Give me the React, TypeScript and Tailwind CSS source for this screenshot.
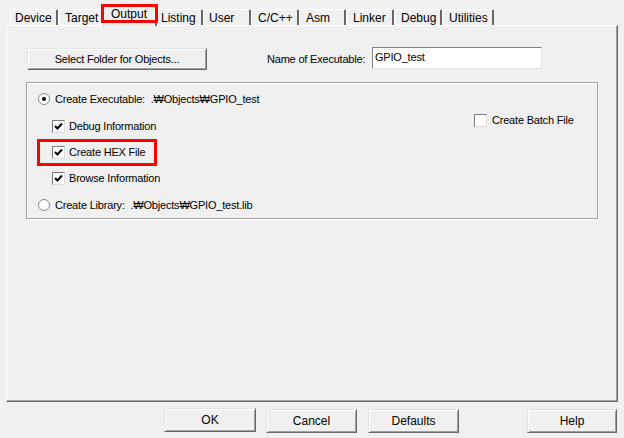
import React from 'react';

const tabs = [
  { label: 'Device', w: 'w-[48px]', pl: 'pl-[4px]' },
  { label: 'Target', w: 'w-[45px]', pl: 'pl-[6px]' },
  { label: 'Output', w: 'w-[52px]', pl: 'pl-[6px]', active: true },
  { label: 'Listing', w: 'w-[48px]', pl: 'pl-[5px]' },
  { label: 'User', w: 'w-[48px]', pl: 'pl-[5px]' },
  { label: 'C/C++', w: 'w-[48px]', pl: 'pl-[6px]' },
  { label: 'Asm', w: 'w-[47px]', pl: 'pl-[6px]' },
  { label: 'Linker', w: 'w-[48px]', pl: 'pl-[6px]' },
  { label: 'Debug', w: 'w-[48px]', pl: 'pl-[6px]' },
  { label: 'Utilities', w: 'w-[52px]', pl: 'pl-[6px]' },
];

// classic 3d push button
const Button = ({ label, w }: { label: string; w: string }) => (
  <button
    className={`${w} h-[24px] bg-[#f0f0f0] border border-t-[#e3e3e3] border-l-[#e3e3e3] border-r-[#696969] border-b-[#696969] shadow-[inset_1px_1px_0_#ffffff,inset_-1px_-1px_0_#a0a0a0] text-[12px] text-black leading-none`}
  >
    {label}
  </button>
);

const CheckBox = ({ checked }: { checked?: boolean }) => (
  <span className="w-[13px] h-[13px] bg-white border border-t-[#7a7a7a] border-l-[#7a7a7a] border-r-[#dcdcdc] border-b-[#dcdcdc] flex items-center justify-center shrink-0">
    {checked && (
      <svg width="9" height="9" viewBox="0 0 9 9">
        <path d="M1 4 L3.5 6.5 L8 1.5" stroke="#000" strokeWidth="2" fill="none" />
      </svg>
    )}
  </span>
);

const Radio = ({ checked }: { checked?: boolean }) => (
  <span className="w-[12px] h-[12px] rounded-full bg-white border border-[#8a8a8a] flex items-center justify-center shrink-0">
    {checked && <span className="w-[4px] h-[4px] rounded-full bg-black" />}
  </span>
);

const App = () => {
  return (
    <div className="w-[624px] h-[438px] bg-[#f0f0f0] text-black font-['Liberation_Sans','DejaVu_Sans','Noto_Sans_CJK_KR',sans-serif] overflow-hidden">
      {/* Tab strip */}
      <div className="flex items-end h-[25px] pl-[10px]">
        {tabs.map((t) =>
          t.active ? (
            <div
              key={t.label}
              className="relative z-10 -mx-[2px] -mb-[1px] w-[56px] h-[21px] bg-[#f0f0f0] border-t border-l border-white border-r-2 border-r-[#696969] rounded-t-[2px] pl-[9px] text-[12px] leading-[14px] pt-[1px]"
            >
              {t.label}
              <div className="absolute -left-px -right-[3px] -top-[2px] bottom-[3px] border-[3px] border-[#ff0000]" />
            </div>
          ) : (
            <div
              key={t.label}
              className={`${t.w} ${t.pl} h-[16px] border-t border-l border-white border-r-2 border-r-[#696969] rounded-t-[2px] text-[12px] leading-[14px] pt-[1px]`}
            >
              {t.label}
            </div>
          )
        )}
      </div>

      {/* Tab panel */}
      <div className="ml-[6px] w-[612px] h-[377px] border-t border-l border-white border-r border-b border-r-[#696969] border-b-[#696969] shadow-[inset_-1px_-1px_0_#a0a0a0] pl-[20px] pt-[22px] text-[11px] tracking-[-0.2px]">
        <div className="flex items-center h-[22px]">
          <button className="w-[180px] h-[22px] bg-[#f0f0f0] border border-t-[#e3e3e3] border-l-[#e3e3e3] border-r-[#696969] border-b-[#696969] shadow-[inset_1px_1px_0_#ffffff,inset_-1px_-1px_0_#a0a0a0] text-[11px] tracking-[-0.2px]">
            Select Folder for Objects...
          </button>
          <span className="ml-[60px] w-[99px]">Name of Executable:</span>
          <div className="ml-[6px] -mt-[2px] w-[170px] h-[22px] bg-white border border-t-[#828282] border-l-[#828282] border-r-[#e3e3e3] border-b-[#e3e3e3] pl-[2px] pt-[2px] leading-[14px]">
            GPIO_test
          </div>
        </div>

        {/* Group box */}
        <div className="mt-[12px] -ml-px w-[572px] h-[137px] border border-[#a0a0a0] shadow-[1px_1px_0_#ffffff,inset_1px_1px_0_#ffffff] flex">
          <div className="w-[447px] pl-[11px] pt-[8px] flex flex-col">
            <div className="flex items-center h-[16px] gap-[5px]">
              <Radio checked />
              <span>Create Executable:&nbsp;&nbsp;.₩Objects₩GPIO_test</span>
            </div>
            <div className="flex items-center h-[16px] gap-[4px] mt-[11px] pl-[14px]">
              <CheckBox checked />
              <span>Debug Information</span>
            </div>
            <div className="relative flex items-center h-[16px] gap-[4px] mt-[10px] pl-[14px]">
              <CheckBox checked />
              <span>Create HEX File</span>
              <div className="absolute -left-[1px] -top-[5px] w-[120px] h-[27px] border-[3px] border-[#ff0000]" />
            </div>
            <div className="flex items-center h-[16px] gap-[4px] mt-[10px] pl-[14px]">
              <CheckBox checked />
              <span>Browse Information</span>
            </div>
            <div className="flex items-center h-[16px] gap-[5px] mt-[11px]">
              <Radio />
              <span>Create Library:&nbsp;&nbsp;.₩Objects₩GPIO_test.lib</span>
            </div>
          </div>
          <div className="pt-[29px]">
            <div className="flex items-center h-[16px] gap-[5px]">
              <CheckBox />
              <span>Create Batch File</span>
            </div>
          </div>
        </div>
      </div>

      {/* Bottom buttons */}
      <div className="flex mt-[6px] pl-[164px]">
        <Button label="OK" w="w-[92px]" />
        <div className="ml-[10px]">
          <Button label="Cancel" w="w-[91px]" />
        </div>
        <div className="ml-[11px]">
          <Button label="Defaults" w="w-[91px]" />
        </div>
        <div className="ml-[68px]">
          <Button label="Help" w="w-[90px]" />
        </div>
      </div>
    </div>
  );
};

export default App;
